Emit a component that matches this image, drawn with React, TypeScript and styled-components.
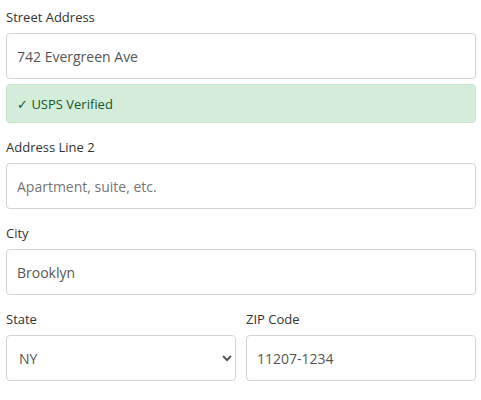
import React, { useState } from "react"
import styled, { createGlobalStyle } from "styled-components"

const GlobalStyle = createGlobalStyle`
  body {
    margin: 0;
    background: #ffffff;
    font-family: "Open Sans", "Noto Sans", sans-serif;
  }
`

export default function App() {
  const [street, setStreet] = useState("742 Evergreen Ave")
  const [line2, setLine2] = useState("")
  const [city, setCity] = useState("Brooklyn")
  const [state, setState] = useState("NY")
  const [zip, setZip] = useState("11207-1234")

  return (
    <>
      <GlobalStyle />
      <Form>
        <Field>
          <Label>Street Address</Label>
          <Input value={street} onChange={(e) => setStreet(e.target.value)} />
          <Verified>✓ USPS Verified</Verified>
        </Field>
        <Field>
          <Label>Address Line 2</Label>
          <Input
            placeholder="Apartment, suite, etc."
            value={line2}
            onChange={(e) => setLine2(e.target.value)}
          />
        </Field>
        <Field>
          <Label>City</Label>
          <Input value={city} onChange={(e) => setCity(e.target.value)} />
        </Field>
        <Row>
          <Field>
            <Label>State</Label>
            <Select value={state} onChange={(e) => setState(e.target.value)}>
              <option value="NY">NY</option>
              <option value="NJ">NJ</option>
              <option value="CA">CA</option>
            </Select>
          </Field>
          <Field>
            <Label>ZIP Code</Label>
            <Input value={zip} onChange={(e) => setZip(e.target.value)} />
          </Field>
        </Row>
      </Form>
    </>
  )
}

const Form = styled.div`
  width: 470px;
  padding: 7px 0 0 6px;
  display: flex;
  flex-direction: column;
  gap: 14px;
`

const Field = styled.div`
  display: flex;
  flex-direction: column;
  min-width: 0;
`

const Row = styled.div`
  display: grid;
  grid-template-columns: 1fr 1fr;
  column-gap: 10px;
`

const Label = styled.label`
  font-size: 13px;
  line-height: 20px;
  color: #333333;
  margin-bottom: 6px;
`

const Input = styled.input`
  box-sizing: border-box;
  width: 100%;
  height: 46px;
  padding: 0 10px;
  border: 1px solid #d4d4d4;
  border-radius: 4px;
  font-family: "Open Sans", "Noto Sans", sans-serif;
  font-size: 14px;
  color: #555555;
  outline: none;
  ::placeholder {
    color: #7a7a7a;
  }
`

const Select = styled.select`
  box-sizing: border-box;
  width: 100%;
  height: 46px;
  padding: 0 8px;
  border: 1px solid #d4d4d4;
  border-radius: 4px;
  background: #ffffff;
  font-family: "Open Sans", "Noto Sans", sans-serif;
  font-size: 14px;
  color: #555555;
  outline: none;
`

const Verified = styled.div`
  box-sizing: border-box;
  margin-top: 5px;
  height: 39px;
  padding: 0 10px;
  display: flex;
  align-items: center;
  background: #d4edda;
  border: 1px solid #c3e6cb;
  border-radius: 4px;
  font-size: 13px;
  color: #155724;
`
